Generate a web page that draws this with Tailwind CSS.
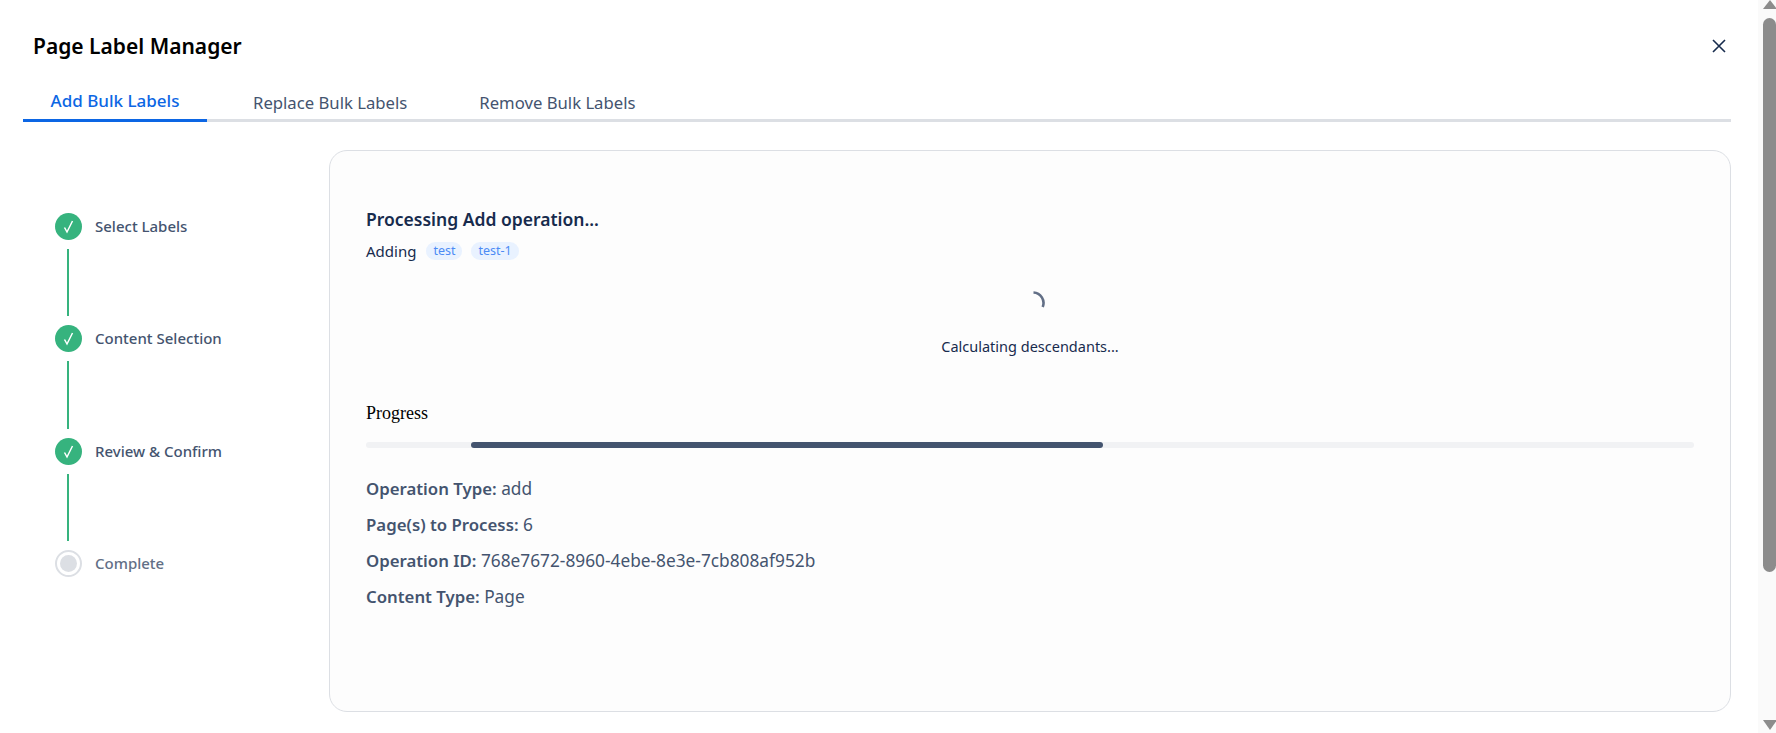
<!DOCTYPE html>
<html lang="en">
<head>
    <meta charset="UTF-8">
    <title>Page Label Manager</title>
    <script src="https://cdn.jsdelivr.net/npm/@tailwindcss/browser@4"></script>
</head>
<body class="bg-white overflow-hidden">
    <div class="flex h-[733px] font-['Noto_Sans',sans-serif]">
        <!-- Main -->
        <main class="flex-1 pl-[23px] pr-[27px]">
            <!-- Header -->
            <header class="flex items-center justify-between h-[93px] pl-[10px]">
                <h1 class="text-[21px] font-semibold text-black">Page Label Manager</h1>
                <button class="mr-[4px] mb-[1px] text-[#172b4d]">
                    <svg class="w-[16px] h-[16px]" viewBox="0 0 16 16" fill="none" stroke="currentColor" stroke-width="1.6"><path d="M2 2l12 12M14 2L2 14"/></svg>
                </button>
            </header>

            <!-- Tabs -->
            <div class="flex h-[29px] border-b-[3px] border-[#dcdfe4] text-[16.7px]">
                <div class="w-[184px] h-[29px] border-b-[3px] border-[#0c66e4] text-center text-[17px] font-medium text-[#0c66e4] leading-[16px]">Add Bulk Labels</div>
                <div class="ml-[46px] text-[#44546f] leading-[20px]">Replace Bulk Labels</div>
                <div class="ml-[72px] text-[#44546f] leading-[20px]">Remove Bulk Labels</div>
            </div>

            <div class="flex mt-[28px]">
                <!-- Stepper -->
                <div class="w-[306px] pl-[32px] pt-[63px] text-[15px] font-medium text-[#44546f]">
                    <div class="flex items-center gap-[13px] h-[27px]">
                        <div class="w-[27px] h-[27px] rounded-full bg-[#36b37e] flex items-center justify-center">
                            <svg class="w-[13px] h-[15px]" viewBox="0 0 13 15" fill="none" stroke="white" stroke-width="1.5"><path d="M2.5 8.5l2.5 4.5L10.5 2"/></svg>
                        </div>
                        <span class="-mt-[1px]">Select Labels</span>
                    </div>
                    <div class="w-[2px] h-[67px] my-[9px] ml-[12px] bg-[#36b37e]"></div>
                    <div class="flex items-center gap-[13px] h-[27px]">
                        <div class="w-[27px] h-[27px] rounded-full bg-[#36b37e] flex items-center justify-center">
                            <svg class="w-[13px] h-[15px]" viewBox="0 0 13 15" fill="none" stroke="white" stroke-width="1.5"><path d="M2.5 8.5l2.5 4.5L10.5 2"/></svg>
                        </div>
                        <span class="-mt-[1px]">Content Selection</span>
                    </div>
                    <div class="w-[2px] h-[68px] my-[9px] ml-[12px] bg-[#36b37e]"></div>
                    <div class="flex items-center gap-[13px] h-[27px]">
                        <div class="w-[27px] h-[27px] rounded-full bg-[#36b37e] flex items-center justify-center">
                            <svg class="w-[13px] h-[15px]" viewBox="0 0 13 15" fill="none" stroke="white" stroke-width="1.5"><path d="M2.5 8.5l2.5 4.5L10.5 2"/></svg>
                        </div>
                        <span class="-mt-[1px]">Review &amp; Confirm</span>
                    </div>
                    <div class="w-[2px] h-[67px] my-[9px] ml-[12px] bg-[#36b37e]"></div>
                    <div class="flex items-center gap-[13px] h-[27px]">
                        <div class="w-[27px] h-[27px] rounded-full border-2 border-[#dcdfe4] flex items-center justify-center">
                            <div class="w-[17px] h-[17px] rounded-full bg-[#dcdfe4]"></div>
                        </div>
                        <span class="-mt-[1px] text-[#626f86]">Complete</span>
                    </div>
                </div>

                <!-- Card -->
                <div class="flex-1 h-[562px] rounded-[18px] border border-[#dcdfe4] bg-[#fdfdfd] px-[36px] pt-[55px]">
                    <h2 class="text-[17.5px] font-semibold leading-[26px] text-[#172b4d]">Processing Add operation...</h2>
                    <div class="flex items-center mt-[9px] h-[20px] text-[15px] text-[#172b4d]">
                        <span>Adding</span>
                        <span class="ml-[10px] h-[18px] px-[7px] rounded-full bg-[#e9f2ff] text-[12.5px] leading-[18px] text-[#4c8bf5]">test</span>
                        <span class="ml-[9px] h-[18px] px-[7px] rounded-full bg-[#e9f2ff] text-[12.5px] leading-[18px] text-[#4c8bf5]">test-1</span>
                    </div>

                    <div class="flex flex-col items-center mt-[30px]">
                        <svg class="w-[24px] h-[24px] ml-[6px]" viewBox="0 0 24 24" fill="none" stroke="#626f86" stroke-width="2.6"><path d="M12.5 1.5A10.5 10.5 0 0 1 21.7 16"/></svg>
                        <p class="mt-[21px] text-[14.5px] leading-[20px] text-[#172b4d]">Calculating descendants...</p>
                    </div>

                    <div class="mt-[47px] font-['Liberation_Serif',serif] text-[18px] leading-[20px] text-black">Progress</div>
                    <div class="relative h-[6px] mt-[19px] rounded-full bg-[#f1f2f4]">
                        <div class="absolute left-[105px] w-[632px] h-[6px] rounded-full bg-[#44546f]"></div>
                    </div>

                    <div class="mt-[29px] text-[17.3px] text-[#44546f]">
                        <p class="h-[36px] leading-[24px]"><b class="text-[16.8px] font-semibold">Operation Type:</b> add</p>
                        <p class="h-[36px] leading-[24px]"><b class="text-[16.8px] font-semibold">Page(s) to Process:</b> 6</p>
                        <p class="h-[36px] leading-[24px]"><b class="text-[16.8px] font-semibold">Operation ID:</b> 768e7672-8960-4ebe-8e3e-7cb808af952b</p>
                        <p class="h-[36px] leading-[24px]"><b class="text-[16.8px] font-semibold">Content Type:</b> Page</p>
                    </div>
                </div>
            </div>
        </main>

        <!-- Scrollbar -->
        <div class="flex flex-col items-center w-[18px] bg-[#fafafa] pl-[5px]">
            <div class="w-0 h-0 border-x-[7px] border-x-transparent border-b-[9px] border-b-[#8c8c8c]"></div>
            <div class="w-[13px] h-[554px] mt-[9px] rounded-full bg-[#8c8c8c]"></div>
            <div class="mt-[148px] w-0 h-0 border-x-[7px] border-x-transparent border-t-[10px] border-t-[#8c8c8c]"></div>
        </div>
    </div>
</body>
</html>
